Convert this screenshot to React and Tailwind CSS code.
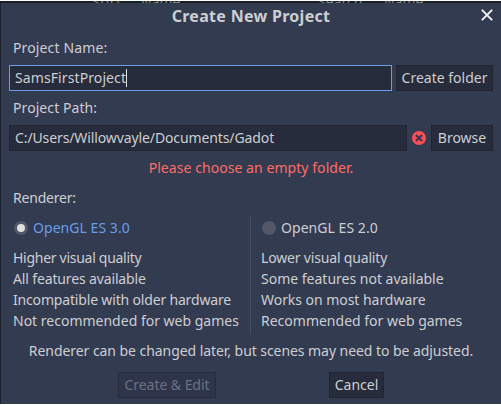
const button = "flex h-[26px] shrink-0 items-center justify-center border border-[#202531] bg-[#262c3b] pb-px";

function Backdrop() {
  return (
    <div className="flex h-0.5 shrink-0 overflow-hidden bg-[#17221f] text-[#7d8583]">
      <span className="ml-[92px] mt-[-6px] w-[49px] tracking-[0.8px] leading-none">Sort:</span>
      <span className="mt-[-6px] w-[177px] leading-none">Name</span>
      <span className="mt-[-6px] w-[66px] leading-none">Search:</span>
      <span className="mt-[-6px] leading-none">Name</span>
    </div>
  );
}

function Radio({ selected }) {
  return (
    <span className="flex size-3.5 items-center justify-center rounded-full bg-[#525869]">
      {selected && <span className="size-2 rounded-full bg-[#e0e0e0]" />}
    </span>
  );
}

function Option({ title, selected, children }) {
  return (
    <div className="flex flex-col">
      <div className={`mb-[6px] flex h-[26px] items-center gap-[5px] pl-px ${selected ? "text-[#699ce8]" : ""}`}>
        <Radio selected={selected} />
        <span className="mb-px tracking-[0.05px]">{title}</span>
      </div>
      {children}
    </div>
  );
}

export default function App() {
  return (
    <div className="h-[406px] w-[501px] overflow-hidden bg-white pt-px font-['Noto_Sans',sans-serif] text-[14px] leading-[21px] whitespace-nowrap text-[#cdced2]">
      <Backdrop />
      <div className="flex h-[401px] flex-col border-l border-[#1a202c] bg-[#333b51]">
        <header className="grid h-[26px] shrink-0 grid-cols-[1fr_auto_1fr] items-center">
          <span />
          <h1 className="text-[16px] font-bold tracking-[0.3px]">Create New Project</h1>
          <svg viewBox="0 0 12 12" className="mr-2 size-3 -translate-y-px justify-self-end" stroke="#f0f0f2" strokeWidth="2" strokeLinecap="round">
            <path d="M1.4 1.4l9.2 9.2M10.6 1.4l-9.2 9.2" />
          </svg>
        </header>
        <div className="mt-2 pl-3 tracking-[0.13px]">Project Name:</div>
        <div className="mt-[7px] flex gap-1 pr-2 pl-2">
          <div className="flex h-[26px] w-[383px] items-center border border-[#699ce8] bg-[#262c3b] pb-px pl-[5px]">
            <span className="tracking-[0.1px]">SamsFirstProject</span>
            <span className="mt-px h-[18px] w-px bg-[#e0e0e0]" />
          </div>
          <div className={`${button} w-[97px]`}>Create folder</div>
        </div>
        <div className="mt-[6px] pl-3 tracking-[0.08px]">Project Path:</div>
        <div className="mt-[7px] flex items-center pl-2">
          <div className="flex h-[26px] w-[398px] items-center border border-[#202531] bg-[#262c3b] pb-px pl-[5px] tracking-[-0.11px]">
            C:/Users/Willowvayle/Documents/Gadot
          </div>
          <svg viewBox="0 0 14 14" className="mx-[5px] size-3.5">
            <circle cx="7" cy="7" r="7" fill="#ff4d57" />
            <path d="M3.9 3.9l6.2 6.2M10.1 3.9l-6.2 6.2" stroke="#333b51" strokeWidth="2.1" />
          </svg>
          <div className={`${button} w-[62px]`}>Browse</div>
        </div>
        <div className="mt-[6px] text-center tracking-[0.06px] text-[#ff6c66]">Please choose an empty folder.</div>
        <div className="mt-[9px] pl-3 tracking-[-0.2px]">Renderer:</div>
        <div className="mt-[7px] flex h-[119px] pl-3">
          <div className="w-[237px]">
            <Option title="OpenGL ES 3.0" selected>
              <span className="tracking-[-0.28px]">Higher visual quality</span>
              <span className="tracking-[-0.14px]">All features available</span>
              <span className="tracking-[-0.17px]">Incompatible with older hardware</span>
              <span>Not recommended for web games</span>
            </Option>
          </div>
          <div className="w-px bg-[#474e62]" />
          <div className="pl-2.5">
            <Option title="OpenGL ES 2.0">
              <span className="tracking-[-0.17px]">Lower visual quality</span>
              <span>Some features not available</span>
              <span className="tracking-[-0.04px]">Works on most hardware</span>
              <span>Recommended for web games</span>
            </Option>
          </div>
        </div>
        <div className="mt-[6px] text-center tracking-[-0.06px]">Renderer can be changed later, but scenes may need to be adjusted.</div>
        <div className="mt-[11px] flex gap-[113px] pl-[117px]">
          <div className="flex h-[26px] w-[98px] items-center justify-center border border-[#262c3b] bg-[#2e354a] pb-px tracking-[-0.05px] text-[#6c7180]">Create &amp; Edit</div>
          <div className={`${button} w-[55px]`}>Cancel</div>
        </div>
      </div>
    </div>
  );
}
